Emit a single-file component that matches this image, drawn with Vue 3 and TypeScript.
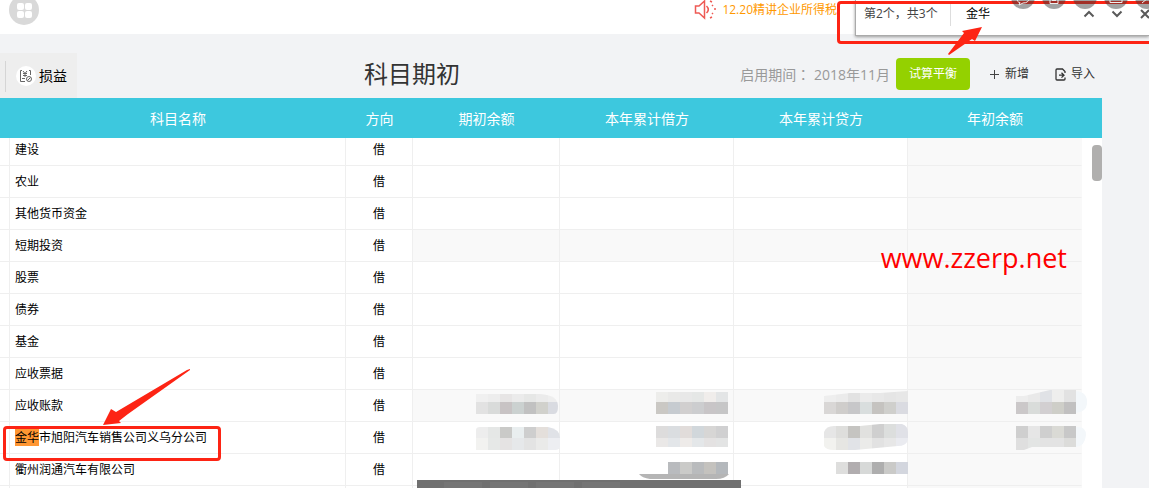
<script setup lang="ts">
interface Account {
  name: string
  match?: string
  group?: boolean
}

interface Tile {
  x: number
  y: number
  h: number
  colors: string[]
}

const columns: string[] = ['科目名称', '方向', '期初余额', '本年累计借方', '本年累计贷方', '年初余额']

const accounts: Account[] = [
  { name: '建设' },
  { name: '农业' },
  { name: '其他货币资金' },
  { name: '短期投资', group: true },
  { name: '股票' },
  { name: '债券' },
  { name: '基金' },
  { name: '应收票据' },
  { name: '应收账款', group: true },
  { name: '市旭阳汽车销售公司义乌分公司', match: '金华' },
  { name: '衢州润通汽车有限公司' },
]

/* Masked amounts: strips of 12px tiles, in the coordinates of the mask drawing */
const openingTiles: Tile[] = [
  { x: 76, y: 14, h: 8, colors: ['#f0f0f0', '#ededed', '#e7e5e5', '#ebebeb', '#e6e7e6', '#ebebeb', '#eeeeee'] },
  { x: 76, y: 22, h: 12, colors: ['#e2e2e2', '#d9dbda', '#c8c3c4', '#cbd1d0', '#c1c1c1', '#d1d1cc', '#d9dbe1'] },
]
const openingTiles2: Tile[] = [
  { x: 76, y: 47, h: 11, colors: ['#ededed', '#e5e7e6', '#cacac8', '#e9eeef', '#cecece', '#e4dfdb', '#e0e2e7'] },
  { x: 76, y: 58, h: 12, colors: ['#f2f2f0', '#e6e8e7', '#e5e3e3', '#e6e8ea', '#e3e3e3', '#eaeae9', '#edeef2'] },
]
const debitTiles: Tile[] = [
  { x: 256, y: 12, h: 10, colors: ['#ededeb', '#e9e9e8', '#e8e8e8', '#e5e7e6', '#f0edeb', '#e3e5e6'] },
  { x: 256, y: 22, h: 12, colors: ['#cac8c4', '#c6cbd0', '#d1cfcf', '#cccdcf', '#c8c5c7', '#c6c6c7'] },
  { x: 256, y: 46, h: 12, colors: ['#dddcdc', '#dadde0', '#e1dcda', '#d1d7db', '#d7d6d5', '#d0d0d1'] },
  { x: 256, y: 58, h: 9, colors: ['#eae8e7', '#e3e6e9', '#eeebe9', '#e4e7e9', '#e4e2e2', '#e3e4e4'] },
  { x: 268, y: 82, h: 12, colors: ['#b9bbbe', '#cacac8', '#b9bbbd', '#c4c2be', '#b4b8bc'] },
]
const creditTiles: Tile[] = [
  { x: 424, y: 11, h: 11, colors: ['#eeeeee', '#ebebeb', '#e2e2e2', '#ebebeb', '#e8e8e8', '#e5e5e5', '#e7e7e7'] },
  { x: 424, y: 22, h: 12, colors: ['#d9d7d6', '#cfcdcb', '#c7c7c9', '#d9dede', '#c5c3c0', '#cfcfcc', '#dadbe1'] },
]
const creditTiles2: Tile[] = [
  { x: 424, y: 44, h: 14, colors: ['#e6e6e6', '#dededc', '#c5c4c1', '#e1e1df', '#cfcfcf', '#dcdedd', '#e0e1e7'] },
  { x: 424, y: 58, h: 12, colors: ['#f2f2ef', '#e6e6e3', '#e1e3e7', '#ebebe9', '#e2e2e2', '#e7e7e7', '#eaebf0'] },
]
const creditTiles3: Tile[] = [
  { x: 436, y: 82, h: 12, colors: ['#dededd', '#b1adaf', '#d7d9d8', '#aeaeae', '#cacac8', '#d3d6de'] },
]
const yearTiles: Tile[] = [
  { x: 616, y: 10, h: 12, colors: ['#ededed', '#e9e9e9', '#e0e2e6', '#eeeeed', '#e2e2e2'] },
  { x: 616, y: 22, h: 12, colors: ['#cbc8c9', '#d9dcda', '#d2cfd1', '#cecec8', '#c1c0c0'] },
]
const yearTiles2: Tile[] = [
  { x: 616, y: 46, h: 12, colors: ['#cfcfcf', '#e6e6e6', '#cfcfcf', '#dadad5', '#c8c8c8'] },
  { x: 616, y: 58, h: 12, colors: ['#dfdfdf', '#e3e5e4', '#e3e3e3', '#e3e3e3', '#dcdcda'] },
]

const masks: { clip: string; tiles: Tile[] }[] = [
  { clip: 'M76 14H140Q158 15 158 26Q158 34 154 34H76Z', tiles: openingTiles },
  { clip: 'M76 50Q76 47 80 47H148Q160 49 160 58V66Q160 70 155 70H76Z', tiles: openingTiles2 },
  { clip: 'M256 12H328V96H256Z', tiles: debitTiles },
  { clip: 'M424 16L450 13H480L508 11V34H424Z', tiles: creditTiles },
  { clip: 'M424 52Q426 46 434 46H460L480 44H502Q508 46 508 52V60Q506 66 498 66L455 70H434Q426 70 424 66Z', tiles: creditTiles2 },
  { clip: 'M436 82H508V94H436Z', tiles: creditTiles3 },
  { clip: 'M616 16H624L650 10H676V34H616Z', tiles: yearTiles },
  { clip: 'M616 46H676V67H632L624 70H616Z', tiles: yearTiles2 },
]

const shortcuts: string[] = ['chat', 'clipboard', 'blank', 'calendar', 'edit']
</script>

<template>
  <div class="page">
    <header class="topbar">
      <button class="apps" type="button" aria-label="应用">
        <svg width="30" height="30" viewBox="0 0 30 30">
          <circle cx="15" cy="15" r="15" fill="#d9d9d9" />
          <g fill="#fff">
            <rect x="8" y="8" width="7" height="7" rx="2" />
            <rect x="16" y="8" width="7" height="7" rx="2" />
            <rect x="8" y="16" width="7" height="7" rx="2" />
            <rect x="16" y="16" width="7" height="7" rx="2" />
          </g>
        </svg>
      </button>
      <a class="notice" href="#">
        <svg width="24" height="20" viewBox="0 0 24 20" fill="none" stroke="#ee5a54" stroke-width="1.5">
          <path d="M1.500 6H5L10.500 1V18L5 13H1.500Z" />
          <path d="M12.500 6Q16 9.500 12.500 13" />
          <path d="M16 1L18 2M20 9H22M16 18L18 17M18 5L19 6M18 14L19 13" />
        </svg>
        <span>12.20精讲企业所得税</span>
      </a>
    </header>

    <main class="content">
      <div class="toolbar">
        <button class="tab" type="button">
          <span class="tab-icon">
            <svg width="14" height="14" viewBox="0 0 14 14" fill="none" stroke="#666" stroke-width="1">
              <path d="M3 1.500H1.500V12.500H6M10 1.500H11.500V6M4 2L6 4.500L8 2M4 4.500H8M4 6.500H8M6 4V8M3 9.500H6" />
              <circle cx="10" cy="10" r="2.500" />
              <path d="M8.500 11.500L11.500 8.500" />
            </svg>
          </span>
          <span>损益</span>
        </button>
        <h1>科目期初</h1>
        <div class="actions">
          <span class="period">启用期间<span class="colon">：</span> 2018年11月</span>
          <button class="check" type="button">试算平衡</button>
          <button class="action add" type="button">
            <svg width="11" height="11" viewBox="0 0 11 11" stroke="#444" stroke-width="1"><path d="M5.500 1V10M1 5.500H10" /></svg>
            <span>新增</span>
          </button>
          <button class="action" type="button">
            <svg width="11" height="13" viewBox="0 0 11 13" fill="none" stroke="#333" stroke-width="1.300">
              <path d="M10 5V3.500L7.500 1H2Q1 1 1 2V11Q1 12 2 12H9Q10 12 10 11V9.500" />
              <path d="M4 7.200H8.500M6.500 4.800L9 7.200L6.500 9.600" />
            </svg>
            <span>导入</span>
          </button>
        </div>
      </div>

      <div class="sheet">
        <table>
          <colgroup>
            <col class="c-edge" /><col /><col class="c-dir" /><col class="c-open" />
            <col class="c-sum" /><col class="c-sum" /><col class="c-sum" /><col class="c-scroll" />
          </colgroup>
          <thead>
            <tr>
              <td></td>
              <th v-for="c in columns" :key="c" scope="col">{{ c }}</th>
              <td></td>
            </tr>
          </thead>
          <tbody>
            <tr v-for="a in accounts" :key="a.name" :class="{ group: a.group }">
              <td></td>
              <td class="name"><mark v-if="a.match">{{ a.match }}</mark>{{ a.name }}</td>
              <td class="dir">借</td>
              <td class="sum"></td>
              <td class="sum"></td>
              <td class="sum"></td>
              <td class="year"></td>
              <td class="gutter"></td>
            </tr>
            <tr><td></td><td></td><td></td><td></td><td></td><td></td><td class="year"></td><td class="gutter"></td></tr>
          </tbody>
        </table>
        <div class="thumb"></div>
      </div>
    </main>

    <svg class="masks" width="749" height="108" viewBox="0 0 749 108" aria-hidden="true">
      <defs>
        <clipPath v-for="(m, i) in masks" :id="'mask' + i" :key="i"><path :d="m.clip" /></clipPath>
      </defs>
      <path d="M676 11Q688 12 687 24Q686 32 676 33ZM676 47Q686 46 686 55Q685 66 676 67Z" fill="#f3f7fa" />
      <g v-for="(m, i) in masks" :key="i" :clip-path="`url(#mask${i})`">
        <template v-for="(t, j) in m.tiles" :key="j">
          <rect v-for="(c, k) in t.colors" :key="k" :x="t.x + k * 12" :y="t.y" width="12" :height="t.h" :fill="c" />
        </template>
      </g>
      <path d="M239 94H329Q325 99 316 99H250Q242 98 239 94Z" fill="#b5b5b5" />
      <rect x="17" y="100" width="324" height="8" fill="#707070" />
      <path d="M44 102H82V108H44ZM90 102H128V108H90ZM136 102H174V108H136ZM182 102H220V108H182Z" fill="#757575" />
    </svg>

    <form class="find" @submit.prevent>
      <label for="find-text">第2个，共3个</label>
      <input id="find-text" type="text" value="金华" />
      <button type="button" aria-label="上一个"><svg width="12" height="8" viewBox="0 0 12 8"><path d="M1.500 6.500L6 2L10.500 6.500" /></svg></button>
      <button type="button" aria-label="下一个"><svg width="12" height="8" viewBox="0 0 12 8"><path d="M1.500 1.500L6 6L10.500 1.500" /></svg></button>
      <button type="button" aria-label="关闭"><svg width="12" height="12" viewBox="0 0 12 12"><path d="M2 2L10 10M10 2L2 10" /></svg></button>
    </form>

    <div class="frame frame-find"></div>
    <div class="frame frame-row"></div>

    <div class="shortcuts">
      <svg v-for="s in shortcuts" :key="s" width="24" height="10" viewBox="0 0 24 10" fill="none" stroke="#eee">
        <circle cx="12" cy="-3" r="12" fill="#3c3c3c" fill-opacity="0.48" stroke="none" />
        <path v-if="s === 'chat'" d="M6 -2Q6 2.500 9 2.500L8 5L12 3Q18 3 18 -2" />
        <path v-else-if="s === 'clipboard'" d="M8 -1V3.500H16V-1M10 0.500H14" />
        <path v-else-if="s === 'calendar'" d="M6 -1V2.500H18V-1" />
        <path v-else-if="s === 'edit'" d="M7 3L13 -2L17 3" />
      </svg>
    </div>

    <svg class="arrow arrow-find" width="34" height="30" viewBox="0 0 34 30"><path d="M0 27L16 6L14 4L34 0L27 14L24 12L1 28Z" fill="#fd2414" /></svg>
    <svg class="arrow arrow-row" width="88" height="58" viewBox="0 0 88 58"><path d="M87 0L84 1L13 43L8 40L0 56L18 54L16 52L25 45L87 1Z" fill="#fd2414" /></svg>
    <div class="watermark">www.zzerp.net</div>
  </div>
</template>

<style>
body {
  margin: 0;
  background: #f2f3f5;
}
</style>

<style scoped>
.page {
  position: relative;
  height: 100vh;
  overflow: hidden;
  font-family: "Open Sans", "Noto Sans CJK SC", sans-serif;
  font-size: 12px;
  line-height: 16px;
  color: #000;
}
button {
  border: 0;
  padding: 0;
  background: none;
  font: inherit;
  color: inherit;
}
svg {
  display: block;
}
.topbar {
  display: flex;
  align-items: flex-start;
  justify-content: space-between;
  box-sizing: border-box;
  height: 34px;
  padding: 0 312px 0 9px;
  background: #fff;
}
.apps {
  margin-top: -5px;
}
.notice {
  display: flex;
  align-items: center;
  gap: 4px;
  color: #f90;
  text-decoration: none;
}
.content {
  margin-right: 47px;
}
.toolbar {
  display: grid;
  grid-template-columns: 364px auto 1fr;
  align-items: center;
  height: 64px;
}
.tab {
  display: flex;
  align-self: end;
  justify-self: start;
  align-items: center;
  gap: 3px;
  box-sizing: border-box;
  height: 45px;
  padding: 0 10px 0 16px;
  background: linear-gradient(#d5d5d5, #d5d5d5) 5px 8px / 1px 31px no-repeat #eee;
  font-size: 14px;
}
.tab-icon {
  display: flex;
  align-items: center;
  justify-content: center;
  width: 20px;
  height: 20px;
  border-radius: 50%;
  background: #fff;
}
h1 {
  margin: 16px 0 0;
  font-size: 24px;
  line-height: 32px;
  font-weight: 400;
  color: #333;
}
.actions {
  display: flex;
  align-items: center;
  justify-content: flex-end;
  margin-top: 16px;
  padding-right: 7px;
  color: #333;
}
.period {
  margin-right: 6px;
  font-size: 14px;
  color: #999;
}
.colon {
  font-family: "Noto Sans CJK TC", sans-serif;
}
.check {
  width: 74px;
  height: 32px;
  margin-right: 19px;
  border-radius: 4px;
  background: #94d100;
  color: #fff;
}
.action {
  display: flex;
  align-items: center;
  gap: 5px;
}
.add {
  margin-right: 26px;
}
.sheet {
  position: relative;
  background: #fff;
}
table {
  width: 100%;
  table-layout: fixed;
  border-collapse: separate;
  border-spacing: 0;
}
.c-edge {
  width: 10px;
}
.c-dir {
  width: 67px;
}
.c-open {
  width: 147px;
}
.c-sum {
  width: 174px;
}
.c-scroll {
  width: 20px;
}
th,
thead td {
  height: 40px;
  padding: 2px 0 0;
  box-sizing: border-box;
  background: #3dc8de;
  color: #fff;
  font-size: 14px;
  font-weight: 400;
}
tbody td {
  box-sizing: border-box;
  height: 32px;
  padding: 0 0 7px;
  border-right: 1px solid #efefef;
  border-bottom: 1px solid #efefef;
  vertical-align: bottom;
}
tbody tr:first-child td {
  height: 28px;
}
tbody .name {
  padding-left: 5px;
}
.dir {
  text-align: center;
}
.group .sum,
tbody .year {
  background: #f9f9f9;
}
tbody .year {
  border-right-color: #f9f9f9;
}
tbody .gutter {
  border: 0;
}
mark {
  background: #ff9632;
  color: inherit;
}
.thumb {
  position: absolute;
  top: 47px;
  right: 0;
  width: 10px;
  height: 36px;
  border-radius: 4px;
  background: #b0afae;
}
.masks {
  position: absolute;
  top: 380px;
  right: 0;
}
.find {
  position: absolute;
  top: 0;
  right: 0;
  display: flex;
  align-items: center;
  box-sizing: border-box;
  width: 294px;
  height: 36px;
  padding: 0 0 8px 8px;
  border-left: 1px solid #aaa;
  border-bottom: 1px solid #aaa;
  background: #fff;
  box-shadow: 0 1px 3px #999;
  color: #444;
}
.find label {
  width: 86px;
  border-right: 1px solid #ddd;
  line-height: 24px;
  white-space: nowrap;
}
.find input {
  flex: 1;
  min-width: 0;
  padding: 0 0 0 15px;
  border: 0;
  outline: 0;
  background: none;
  font: inherit;
  color: #000;
}
.find button {
  width: 28px;
  flex: none;
}
.find button svg {
  margin: 0 auto;
  fill: none;
  stroke: #5a5a5a;
  stroke-width: 2;
}
.find button:last-child {
  margin-right: -10px;
}
.shortcuts {
  position: absolute;
  top: 0;
  right: -10px;
  display: flex;
  gap: 7px;
}
.frame {
  position: absolute;
  border: 3px solid #fd2414;
  border-radius: 4px;
}
.frame-find {
  top: 1px;
  right: -8px;
  width: 314px;
  height: 37px;
}
.frame-row {
  top: 426px;
  left: 3px;
  width: 212px;
  height: 29px;
}
.arrow {
  position: absolute;
}
.arrow-find {
  top: 27px;
  right: 167px;
}
.arrow-row {
  top: 369px;
  left: 103px;
}
.watermark {
  position: absolute;
  top: 240px;
  right: 82px;
  font-size: 27px;
  line-height: 36px;
  color: #f00;
}
</style>
